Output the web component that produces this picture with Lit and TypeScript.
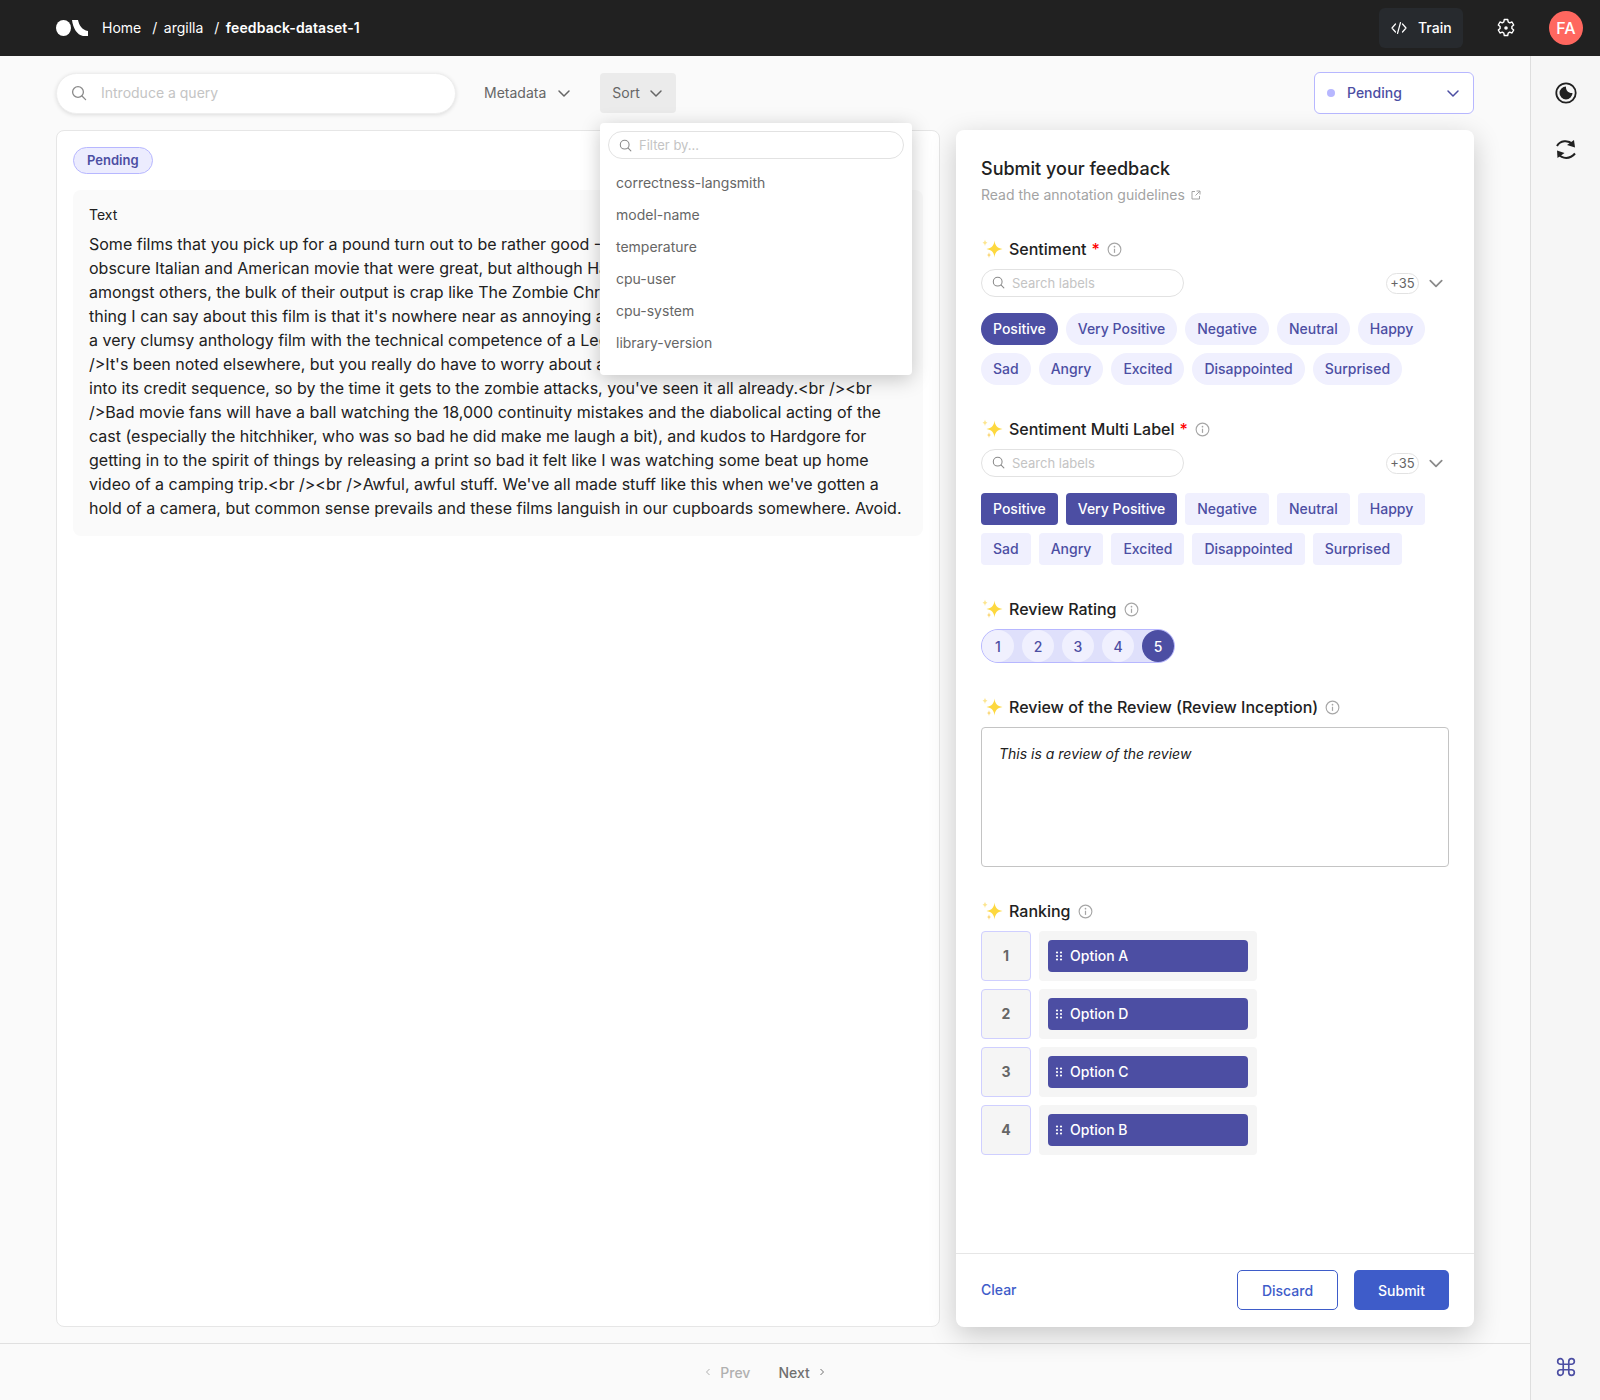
import { LitElement, html, css, svg } from 'lit';
import { customElement } from 'lit/decorators.js';

const LABELS = [
  ['Positive', 'Very Positive', 'Negative', 'Neutral', 'Happy'],
  ['Sad', 'Angry', 'Excited', 'Disappointed', 'Surprised'],
];
const METADATA = ['correctness-langsmith', 'model-name', 'temperature', 'cpu-user', 'cpu-system', 'library-version'];
const RANKING = ['Option A', 'Option D', 'Option C', 'Option B'];

const REVIEW = `Some films that you pick up for a pound turn out to be rather good - 23rd Century films released dozens of obscure Italian and American movie that were great, but although Hardgore released some Fulci films amongst others, the bulk of their output is crap like The Zombie Chronicles.<br /><br />The only positive thing I can say about this film is that it's nowhere near as annoying as the Stink of Flesh. Other than that, its a very clumsy anthology film with the technical competence of a Lego house built by a whelk.<br /><br />It's been noted elsewhere, but you really do have to worry about a film that inserts all its zombie attacks into its credit sequence, so by the time it gets to the zombie attacks, you've seen it all already.<br /><br />Bad movie fans will have a ball watching the 18,000 continuity mistakes and the diabolical acting of the cast (especially the hitchhiker, who was so bad he did make me laugh a bit), and kudos to Hardgore for getting in to the spirit of things by releasing a print so bad it felt like I was watching some beat up home video of a camping trip.<br /><br />Awful, awful stuff. We've all made stuff like this when we've gotten a hold of a camera, but common sense prevails and these films languish in our cupboards somewhere. Avoid.`;

const chevron = svg`<path d="M2 5l5 5 5-5" fill="none" stroke="currentColor" stroke-width="1.5" stroke-linecap="round" stroke-linejoin="round"/>`;
const searchIcon = html`<svg class="search-icon" viewBox="0 0 16 16"><circle cx="7" cy="7" r="5.4" fill="none" stroke="currentColor" stroke-width="1.3"/><path d="M11 11l3.6 3.6" stroke="currentColor" stroke-width="1.3" stroke-linecap="round"/></svg>`;
const infoIcon = html`<svg class="info" viewBox="0 0 16 16"><circle cx="8" cy="8" r="6.8" fill="none" stroke="currentColor" stroke-width="1.2"/><circle cx="8" cy="5" r=".9" fill="currentColor"/><path d="M8 7.2v4.4" stroke="currentColor" stroke-width="1.3"/></svg>`;
const sparkles = html`<svg class="sparkles" viewBox="0 0 22 20"><path d="M4 .5C4.300 2.500 5 3.300 6.500 3.800 5 4.300 4.300 5 4 7.300 3.700 5 3 4.300 1.500 3.800 3 3.300 3.700 2.500 4 .5z" fill="#fce58f"/><path d="M8 13C8.300 15 9 15.700 10.300 16 9 16.400 8.300 17 8 19.300 7.700 17 7 16.400 5.700 16 7 15.700 7.700 15 8 13z" fill="#fbd97c"/><path d="M13.500 1.500C14 6.500 16 9 21.500 10 16 11 14 13.500 13.500 18.500 13 13.500 11 11 5.500 10 11 9 13 6.500 13.500 1.500z" fill="#fdd83f"/></svg>`;

@customElement('app-root')
export class AppRoot extends LitElement {
  static styles = css`
    :host {
      display: flex;
      flex-direction: column;
      height: 1400px;
      font-family: Inter, 'Liberation Sans', sans-serif;
      font-size: 14px;
      background: #fafafa;
      color: #212121;
    }
    svg { display: block; flex: none; }

    /* top bar */
    .topbar {
      flex: none;
      height: 56px;
      background: #212121;
      display: flex;
      align-items: center;
      padding: 0 17px 0 56px;
      color: #fff;
    }
    .logo { width: 32px; height: 16px; margin-right: 14px; }
    .crumbs { display: flex; font-size: 14px; flex: 1; padding-bottom: 2px; }
    .crumbs i { font-style: normal; margin: 0 6.5px 0 11px; }
    .crumbs b { font-weight: 600; letter-spacing: 0.1px; }
    .train {
      display: flex;
      align-items: center;
      gap: 11px;
      width: 84px;
      height: 40px;
      box-sizing: border-box;
      padding: 0 0 2px 12px;
      border-radius: 6px;
      background: #272a2e;
      font-size: 14px;
      font-weight: 500;
    }
    .train svg { width: 16px; height: 16px; margin-top: 2px; }
    .gear { width: 20px; height: 20px; margin: 0 33px 0 33px; }
    .avatar {
      width: 34px;
      height: 34px;
      border-radius: 50%;
      background: #ff675f;
      display: flex;
      align-items: center;
      justify-content: center;
      font-size: 16px;
      font-weight: 500;
    }

    /* page */
    .body { flex: 1; display: flex; min-height: 0; }
    .main { flex: 1; display: flex; flex-direction: column; min-width: 0; }
    .side {
      flex: none;
      width: 69px;
      border-left: 1px solid #dedede;
      background: #f6f6f6;
      display: flex;
      flex-direction: column;
      align-items: center;
      padding-top: 26px;
      color: #212121;
    }
    .side .contrast { width: 22px; height: 22px; }
    .side .sync { width: 22px; height: 22px; margin-top: 34px; }
    .side .cmd { width: 20px; height: 20px; margin-top: auto; margin-bottom: 23px; color: #4c4ea3; }

    .content { flex: 1; min-height: 0; display: flex; flex-direction: column; padding: 16px 56px 16px 56px; position: relative; }
    .toolbar { flex: none; height: 42px; display: flex; align-items: center; margin-bottom: 16px; }
    .query {
      width: 400px;
      height: 41px;
      box-sizing: border-box;
      border: 1px solid #eee;
      border-radius: 21px;
      background: #fff;
      box-shadow: 0 1px 4px rgba(0, 0, 0, 0.12);
      display: flex;
      align-items: center;
      gap: 14px;
      padding: 0 0 1px 14px;
      color: #c4c4c4;
      font-size: 14px;
    }
    .query .search-icon { width: 16px; height: 16px; color: #8a8a8a; }
    .filter {
      display: flex;
      align-items: center;
      gap: 11px;
      height: 40px;
      box-sizing: border-box;
      padding: 0 12px 1px;
      border-radius: 4px;
      color: #666;
      font-size: 14px;
    }
    .filter svg { width: 14px; height: 14px; }
    .metadata { margin-left: 16px; margin-right: 17px; }
    .sort { background: #ebebeb; gap: 9px; padding-right: 13px; }
    .status {
      margin-left: auto;
      width: 160px;
      height: 42px;
      box-sizing: border-box;
      border: 1px solid #b7b7ff;
      border-radius: 6px;
      background: #fff;
      color: #4c4ea3;
      display: flex;
      align-items: center;
      padding: 0 13px 1px 12px;
      font-size: 14px;
      font-weight: 500;
    }
    .status i { width: 8px; height: 8px; border-radius: 50%; background: #b7b7ff; margin-right: 12px; }
    .status svg { width: 14px; height: 14px; margin-left: auto; }

    .columns { flex: 1; min-height: 0; display: flex; gap: 16px; }
    .record {
      flex: 1;
      min-width: 0;
      box-sizing: border-box;
      background: #fff;
      border: 1px solid #e6e6e6;
      border-radius: 8px;
      padding: 16px;
    }
    .badge {
      display: inline-flex;
      align-items: center;
      height: 27px;
      box-sizing: border-box;
      padding: 0 13px 1px;
      border: 1px solid #b7b7ff;
      border-radius: 14px;
      background: #ececfe;
      color: #4c4ea3;
      font-size: 13px;
      font-weight: 600;
    }
    .text-box {
      margin-top: 16px;
      background: #fafafa;
      border-radius: 8px;
      padding: 16px;
    }
    .text-box h4 { margin: 0 0 9px; font-size: 14px; line-height: 17px; font-weight: 400; }
    .text-box p { margin: 0; font-size: 16px; line-height: 24px; }

    /* sort dropdown, lies over the record */
    .menu {
      position: absolute;
      left: 600px;
      top: 67px;
      width: 312px;
      height: 252px;
      box-sizing: border-box;
      padding: 8px;
      background: #fff;
      border-radius: 4px;
      box-shadow: 0 4px 20px rgba(0, 0, 0, 0.22);
    }
    .menu-search {
      height: 28px;
      box-sizing: border-box;
      border: 1px solid #e2e2e2;
      border-radius: 14px;
      display: flex;
      align-items: center;
      gap: 7px;
      padding-left: 10px;
      color: #c4c4c4;
      font-size: 13px;
    }
    .menu-search .search-icon { width: 13px; height: 13px; color: #8a8a8a; }
    .menu ul { list-style: none; margin: 8px 0 0; padding: 0 8px; color: #666; font-size: 14px; }
    .menu li { height: 32px; line-height: 32px; }

    /* feedback panel */
    .panel {
      flex: none;
      width: 518px;
      box-sizing: border-box;
      background: #fff;
      border-radius: 8px;
      box-shadow: 0 8px 28px rgba(0, 0, 0, 0.2);
      display: flex;
      flex-direction: column;
    }
    .panel-body { flex: 1; padding: 28px 25px 0; }
    .panel h2 { margin: 0; font-size: 18px; line-height: 22px; font-weight: 450; }
    .guide { display: flex; align-items: center; gap: 6px; margin-top: 6px; color: #a3a3a3; font-size: 14px; line-height: 17px; }
    .guide svg { width: 10px; height: 10px; }
    .question { margin-top: 32px; }
    .question.first { margin-top: 34px; }
    .q-label { display: flex; align-items: center; height: 24px; font-size: 16px; font-weight: 450; }
    .q-label .sparkles { width: 22px; height: 20px; margin-right: 6px; }
    .q-label em { color: #ff0000; font-style: normal; margin-left: 5px; }
    .info { width: 15px; height: 15px; margin-left: 7px; color: #a6a6a6; }
    .label-search { display: flex; align-items: center; margin-top: 8px; }
    .label-input {
      width: 203px;
      height: 28px;
      box-sizing: border-box;
      border: 1px solid #e2e2e2;
      border-radius: 14px;
      display: flex;
      align-items: center;
      gap: 7px;
      padding: 0 0 1px 10px;
      color: #c4c4c4;
      font-size: 13px;
    }
    .label-input .search-icon { width: 13px; height: 13px; color: #8a8a8a; }
    .more {
      margin-left: auto;
      width: 33px;
      height: 21px;
      box-sizing: border-box;
      padding-bottom: 1px;
      border: 1px solid #e2e2e2;
      border-radius: 11px;
      color: #666;
      font-size: 13px;
      display: flex;
      align-items: center;
      justify-content: center;
    }
    .label-search > svg { width: 16px; height: 16px; margin: 0 5px 0 9px; color: #8a8a8a; }
    .chips { display: flex; flex-direction: column; gap: 8px; margin-top: 16px; }
    .chip-row { display: flex; gap: 8px; }
    .chip {
      height: 32px;
      box-sizing: border-box;
      padding: 0 12px 1px;
      border-radius: 16px;
      background: #f0f0fe;
      color: #4c4ea3;
      font-size: 14px;
      font-weight: 500;
      display: flex;
      align-items: center;
    }
    .multi .chip { border-radius: 4px; }
    .chip.on { background: #4c4ea3; color: #fff; }
    .rating {
      display: flex;
      gap: 8px;
      width: 194px;
      height: 34px;
      box-sizing: border-box;
      margin-top: 8px;
      border: 1px solid #b7b7ff;
      border-radius: 17px;
      background: #dfe0fb;
    }
    .rating span {
      width: 32px;
      height: 32px;
      border-radius: 50%;
      background: #f0f0fe;
      color: #4c4ea3;
      font-weight: 500;
      display: flex;
      align-items: center;
      justify-content: center;
    }
    .rating span.on { background: #4c4ea3; color: #fff; }
    .review {
      height: 140px;
      box-sizing: border-box;
      margin-top: 8px;
      border: 1px solid #c4c4c4;
      border-radius: 4px;
      padding: 17px;
      font-style: italic;
      font-size: 14px;
      line-height: 17px;
    }
    .ranks { display: flex; flex-direction: column; gap: 8px; margin-top: 8px; }
    .rank { display: flex; gap: 8px; }
    .slot {
      width: 50px;
      height: 50px;
      box-sizing: border-box;
      padding-bottom: 1px;
      border: 1px solid #cfcfff;
      border-radius: 4px;
      background: #f5f5f5;
      color: #666;
      font-weight: 700;
      display: flex;
      align-items: center;
      justify-content: center;
    }
    .rail { width: 218px; height: 50px; box-sizing: border-box; padding: 9px; background: #f5f5f5; border-radius: 4px; }
    .item {
      height: 32px;
      box-sizing: border-box;
      border-radius: 4px;
      background: #4c4ea3;
      color: #fff;
      display: flex;
      align-items: center;
      gap: 7px;
      padding: 0 0 1px 7px;
      font-size: 14px;
      font-weight: 500;
    }
    .item svg { width: 8px; height: 10px; }
    .panel-foot {
      flex: none;
      height: 74px;
      box-sizing: border-box;
      border-top: 1px solid #e6e6e6;
      padding: 16px 25px 0;
      display: flex;
      align-items: flex-start;
      gap: 16px;
      font-size: 14px;
      font-weight: 500;
    }
    .clear { color: #3e5cc9; margin-right: auto; line-height: 40px; }
    .btn {
      height: 40px;
      box-sizing: border-box;
      border-radius: 5px;
      display: flex;
      align-items: center;
      justify-content: center;
    }
    .discard { width: 101px; border: 1px solid #3e5cc9; color: #3e5cc9; }
    .submit { width: 95px; background: #3e5cc9; color: #fff; }

    /* pagination */
    .pager {
      flex: none;
      height: 57px;
      box-sizing: border-box;
      border-top: 1px solid #e0e0e0;
      background: #fafafa;
      display: flex;
      align-items: center;
      justify-content: center;
      gap: 28px;
      color: #707070;
      font-size: 14px;
    }
    .pager span { display: flex; align-items: center; gap: 9px; font-weight: 500; }
    .pager .off { color: #b0b0b0; }
    .pager svg { width: 6px; height: 8px; }
  `;

  private chips(multi: boolean, on: string[]) {
    return html`<div class="chips ${multi ? 'multi' : ''}">
      ${LABELS.map(
        row => html`<div class="chip-row">
          ${row.map(l => html`<div class="chip ${on.includes(l) ? 'on' : ''}">${l}</div>`)}
        </div>`
      )}
    </div>`;
  }

  private labelSearch() {
    return html`<div class="label-search">
      <div class="label-input">${searchIcon}<span>Search labels</span></div>
      <div class="more">+35</div>
      <svg viewBox="0 0 14 14">${chevron}</svg>
    </div>`;
  }

  private label(text: string, required = false) {
    return html`<div class="q-label">
      ${sparkles}<span>${text}</span>${required ? html`<em>*</em>` : ''}${infoIcon}
    </div>`;
  }

  render() {
    return html`
      <header class="topbar">
        <svg class="logo" viewBox="0 0 32 16">
          <ellipse cx="7.500" cy="8" rx="7.500" ry="8" fill="#fff"/>
          <path d="M16 0h6c1 5 4 10 10 11v5h-5C21 15 17 8 16 0z" fill="#fff"/>
        </svg>
        <nav class="crumbs"><span>Home</span><i>/</i><span>argilla</span><i>/</i><b>feedback-dataset-1</b></nav>
        <div class="train">
          <svg viewBox="0 0 16 16" fill="none" stroke="#fff" stroke-width="1.2" stroke-linecap="round" stroke-linejoin="round"><path d="M4.500 4L1 8l3.500 4M11.500 4L15 8l-3.500 4M9.500 2.500l-3 11"/></svg>
          Train
        </div>
        <svg class="gear" viewBox="0 0 20 20" fill="none" stroke="#fff" stroke-width="1.4" stroke-linejoin="round">
          <path d="M8.300 1.500h3.400l.5 2.400 1.500.9 2.300-.8 1.700 3-1.800 1.600v1.800l1.800 1.600-1.700 3-2.300-.8-1.500.9-.5 2.400H8.300l-.5-2.400-1.500-.9-2.300.8-1.700-3 1.800-1.600V8.600L2.300 7l1.700-3 2.300.8 1.500-.9z"/>
          <circle cx="10" cy="10" r="1.800" fill="#fff" stroke="none"/>
        </svg>
        <div class="avatar">FA</div>
      </header>

      <div class="body">
        <div class="main">
          <section class="content">
            <div class="toolbar">
              <div class="query">${searchIcon}<span>Introduce a query</span></div>
              <div class="filter metadata">Metadata <svg viewBox="0 0 14 14">${chevron}</svg></div>
              <div class="filter sort">Sort <svg viewBox="0 0 14 14">${chevron}</svg></div>
              <div class="status"><i></i>Pending<svg viewBox="0 0 14 14">${chevron}</svg></div>
            </div>
            <div class="columns">
              <article class="record">
                <span class="badge">Pending</span>
                <div class="text-box">
                  <h4>Text</h4>
                  <p>${REVIEW}</p>
                </div>
              </article>
              <aside class="panel">
                <div class="panel-body">
                  <h2>Submit your feedback</h2>
                  <div class="guide">Read the annotation guidelines
                    <svg viewBox="0 0 10 10" fill="none" stroke="currentColor" stroke-width="1"><path d="M4 1.500H1v7.500h7.500V6M5.500 1h3.500v3.500M9 1L4.500 5.500"/></svg>
                  </div>
                  <div class="question first">
                    ${this.label('Sentiment', true)}
                    ${this.labelSearch()}
                    ${this.chips(false, ['Positive'])}
                  </div>
                  <div class="question">
                    ${this.label('Sentiment Multi Label', true)}
                    ${this.labelSearch()}
                    ${this.chips(true, ['Positive', 'Very Positive'])}
                  </div>
                  <div class="question">
                    ${this.label('Review Rating')}
                    <div class="rating">
                      ${[1, 2, 3, 4, 5].map(n => html`<span class=${n === 5 ? 'on' : ''}>${n}</span>`)}
                    </div>
                  </div>
                  <div class="question">
                    ${this.label('Review of the Review (Review Inception)')}
                    <div class="review">This is a review of the review</div>
                  </div>
                  <div class="question">
                    ${this.label('Ranking')}
                    <div class="ranks">
                      ${RANKING.map(
                        (o, i) => html`<div class="rank">
                          <div class="slot">${i + 1}</div>
                          <div class="rail"><div class="item">
                            <svg viewBox="0 0 8 10" fill="#fff"><circle cx="2" cy="1.500" r="1.100"/><circle cx="6" cy="1.500" r="1.100"/><circle cx="2" cy="5" r="1.100"/><circle cx="6" cy="5" r="1.100"/><circle cx="2" cy="8.500" r="1.100"/><circle cx="6" cy="8.500" r="1.100"/></svg>
                            ${o}
                          </div></div>
                        </div>`
                      )}
                    </div>
                  </div>
                </div>
                <div class="panel-foot">
                  <span class="clear">Clear</span>
                  <div class="btn discard">Discard</div>
                  <div class="btn submit">Submit</div>
                </div>
              </aside>
            </div>
            <div class="menu">
              <div class="menu-search">${searchIcon}<span>Filter by...</span></div>
              <ul>${METADATA.map(m => html`<li>${m}</li>`)}</ul>
            </div>
          </section>
          <footer class="pager">
            <span class="off"><svg viewBox="0 0 6 8" fill="none" stroke="currentColor" stroke-width="1"><path d="M4.500 1L1.500 4l3 3"/></svg>Prev</span>
            <span>Next<svg viewBox="0 0 6 8" fill="none" stroke="currentColor" stroke-width="1"><path d="M1.500 1l3 3-3 3"/></svg></span>
          </footer>
        </div>
        <aside class="side">
          <svg class="contrast" viewBox="0 0 22 22"><circle cx="11" cy="11" r="9.700" fill="none" stroke="currentColor" stroke-width="1.800"/><path d="M11 4.500A6.500 6.500 0 1 0 17.500 11C14 11.500 10.500 8.500 11 4.500z" fill="currentColor"/></svg>
          <svg class="sync" viewBox="0 0 22 22" fill="none" stroke="currentColor" stroke-width="2"><path d="M2 8C5 2.500 13 1.500 17.500 6"/><path d="M20 9.500L19 2 12 7z" fill="currentColor" stroke="none"/><path d="M20 15.500C15 21.500 7 21 3.500 16"/><path d="M2 12.500L2.500 20 9.500 15z" fill="currentColor" stroke="none"/></svg>
          <svg class="cmd" viewBox="0 0 18 18" fill="none" stroke="currentColor" stroke-width="1.500"><path d="M6.500 6.500h5v5h-5zM6.500 6.500V4a2.500 2.500 0 1 0-2.500 2.500h2.500zM11.500 6.500V4a2.500 2.500 0 1 1 2.500 2.500h-2.500zM6.500 11.500V14a2.500 2.500 0 1 1-2.500-2.500h2.500zM11.500 11.500V14a2.500 2.500 0 1 0 2.500-2.500h-2.500z"/></svg>
        </aside>
      </div>
    `;
  }
}
